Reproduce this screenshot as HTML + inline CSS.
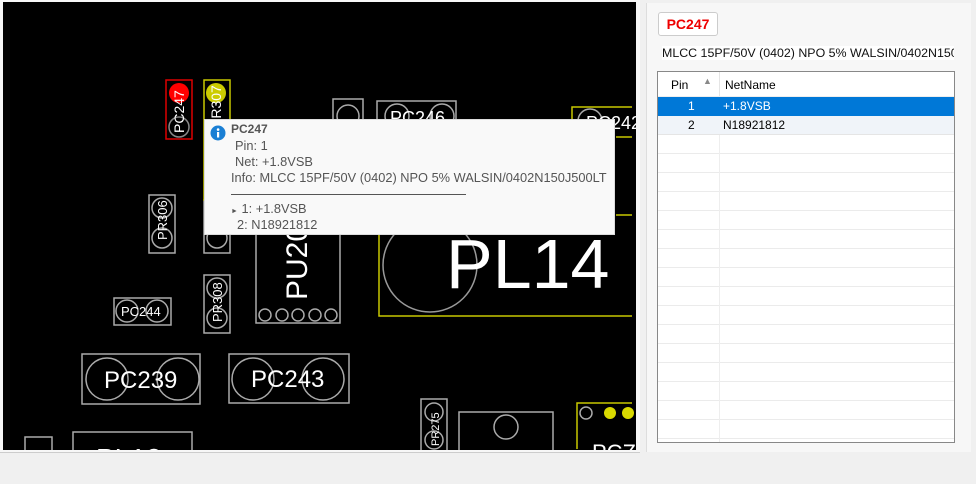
<!DOCTYPE html>
<html><head><meta charset="utf-8"><style>
body{margin:0;width:976px;height:484px;background:#f0f0f0;font-family:"Liberation Sans",sans-serif;position:relative;overflow:hidden}
.abs{position:absolute}
.tip{left:204px;top:119px;width:411px;height:116px;background:#f9f9f9;border:1px solid #ddd;box-sizing:border-box;color:#555;font-size:12.8px}
.tip div{position:absolute;white-space:nowrap}
.panel{left:646px;top:3px;width:324px;height:449px;background:#f7f7f7;border-left:1px solid #ddd}
</style></head><body>
<div class="abs" style="left:0;top:0;width:640px;height:452px;background:#f7f7f7;border-bottom:1px solid #ccc"></div>
<svg class="abs" style="left:3px;top:2px" width="633" height="448">
<g transform="translate(-3,-2)">
<rect x="3" y="2" width="634" height="448" fill="#000"/>
<g fill="none" stroke="#aaa" stroke-width="1.5">
<rect x="149" y="195" width="26" height="58"/><circle cx="162" cy="208" r="10"/><circle cx="162" cy="238" r="10"/>
<rect x="204" y="275" width="26" height="58"/><circle cx="217" cy="288" r="10"/><circle cx="217" cy="318" r="10"/>
<rect x="204" y="200" width="26" height="53"/><circle cx="217" cy="238" r="10"/>
<rect x="256" y="200" width="84" height="123"/>
<circle cx="265" cy="315" r="6"/><circle cx="282" cy="315" r="6"/><circle cx="298" cy="315" r="6"/><circle cx="315" cy="315" r="6"/><circle cx="331" cy="315" r="6"/>
<rect x="114" y="298" width="57" height="27"/><circle cx="127" cy="311" r="11"/><circle cx="157" cy="311" r="11"/>
<rect x="333" y="99" width="30" height="30"/><circle cx="348" cy="116" r="11"/>
<rect x="377" y="101" width="79" height="30"/><circle cx="397" cy="116" r="12"/><circle cx="442" cy="116" r="12"/>
<rect x="82" y="354" width="118" height="50"/><circle cx="107" cy="379" r="21"/><circle cx="178" cy="379" r="21"/>
<rect x="229" y="354" width="120" height="49"/><circle cx="253" cy="379" r="21"/><circle cx="323" cy="379" r="21"/>
<rect x="421" y="399" width="26" height="60"/><circle cx="434" cy="412" r="9"/><circle cx="434" cy="440" r="9"/>
<rect x="459" y="412" width="94" height="50"/><circle cx="506" cy="427" r="12"/>
<rect x="25" y="437" width="27" height="20"/><rect x="73" y="432" width="119" height="30"/>
<circle cx="430" cy="265" r="47" stroke="#999"/>
<circle cx="179" cy="127" r="10" stroke="#888"/><circle cx="586" cy="413" r="6"/>
<circle cx="590" cy="121" r="12"/>
</g>
<g fill="none" stroke="#c8c800" stroke-width="1.5">
<rect x="204" y="80" width="26" height="120"/>
<path d="M572 137V107H632M616 137H632M616 215H632M379 235V316H632M577 449V403H632"/>
</g>
<rect x="166" y="80" width="26" height="59" fill="none" stroke="#d00" stroke-width="1.5"/>
<circle cx="179" cy="93" r="10" fill="#f00"/><circle cx="216" cy="93" r="10" fill="#cccc00"/>
<circle cx="610" cy="413" r="6" fill="#dada00"/><circle cx="628" cy="413" r="6" fill="#dada00"/>
<g fill="#fff" font-family="Liberation Sans">
<text transform="translate(184,133) rotate(-90)" font-size="14">PC247</text>
<text transform="translate(221,128) rotate(-90)" font-size="14">PR307</text>
<text transform="translate(167,240) rotate(-90)" font-size="13">PR306</text>
<text transform="translate(222,322) rotate(-90)" font-size="13">PR308</text>
<text transform="translate(439,446) rotate(-90)" font-size="11">PR275</text>
<text transform="translate(307,300) rotate(-90)" font-size="30">PU20</text>
<text x="121" y="316" font-size="13">PC244</text>
<text x="390" y="124" font-size="18">PC246</text>
<text x="586" y="129" font-size="18">PC242</text>
<text x="446" y="288" font-size="70">PL14</text>
<text x="104" y="388" font-size="24">PC239</text>
<text x="251" y="387" font-size="24">PC243</text>
<text x="96" y="468" font-size="28">PL12</text>
<text x="592" y="460" font-size="22">PCZ</text>
</g>
</g>
</svg>
<div class="abs tip">
<svg class="abs" style="left:5px;top:5px" width="16" height="16"><circle cx="8" cy="8" r="7.5" fill="#1a7fd4"/><rect x="7" y="7" width="2.2" height="5.5" fill="#fff"/><circle cx="8.1" cy="4.6" r="1.3" fill="#fff"/></svg>
<div style="left:26px;top:2px;font-weight:bold;color:#555;font-size:12px">PC247</div>
<div style="left:30px;top:18px">Pin: 1</div>
<div style="left:30px;top:34px">Net: +1.8VSB</div>
<div style="left:26px;top:50px">Info: MLCC 15PF/50V (0402) NPO 5% WALSIN/0402N150J500LT</div>
<div style="left:26px;top:74px;width:235px;height:1px;background:#555"></div>
<div style="left:26px;top:81px"><span style="font-size:7px">►</span> 1: +1.8VSB</div>
<div style="left:32px;top:97px">2: N18921812</div>
</div>
<div class="abs panel">
<div class="abs" style="left:11px;top:9px;width:58px;height:22px;background:#fff;border:1px solid #ccc;border-radius:3px;color:#e00;font-weight:bold;font-size:14px;line-height:22px;text-align:center">PC247</div>
<div class="abs" style="left:15px;top:43px;font-size:12.4px;color:#111;white-space:nowrap;width:292px;overflow:hidden;background:#fff">MLCC 15PF/50V (0402) NPO 5% WALSIN/0402N150J500LT</div>
<div class="abs" style="left:10px;top:68px;width:296px;height:370px;background:#fff;border:1px solid #888;overflow:hidden">
<div style="height:24px;border-bottom:1px solid #eee;font-size:12px;position:relative">
<span class="abs" style="left:13px;top:6px">Pin</span><span class="abs" style="left:45px;top:4px;font-size:9px;color:#888">▲</span>
<span class="abs" style="left:61px;top:0;width:1px;height:24px;background:#e5e5e5"></span>
<span class="abs" style="left:67px;top:6px">NetName</span></div>
<div style="position:relative;height:19px;background:#0078d7;color:#fff;font-size:12px"><span class="abs" style="left:30px;top:2px">1</span><span class="abs" style="left:65px;top:2px">+1.8VSB</span></div>
<div style="position:relative;height:18px;background:#f0f4f9;border-bottom:1px solid #e5e5e5;font-size:12px"><span class="abs" style="left:30px;top:2px">2</span><span class="abs" style="left:65px;top:2px">N18921812</span></div>
<div style="height:320px;position:relative;background:repeating-linear-gradient(#fff 0 18px,#ebebeb 18px 19px)"><span class="abs" style="left:61px;top:0;width:1px;height:320px;background:#eee"></span></div>
</div>
</div>
</body></html>
